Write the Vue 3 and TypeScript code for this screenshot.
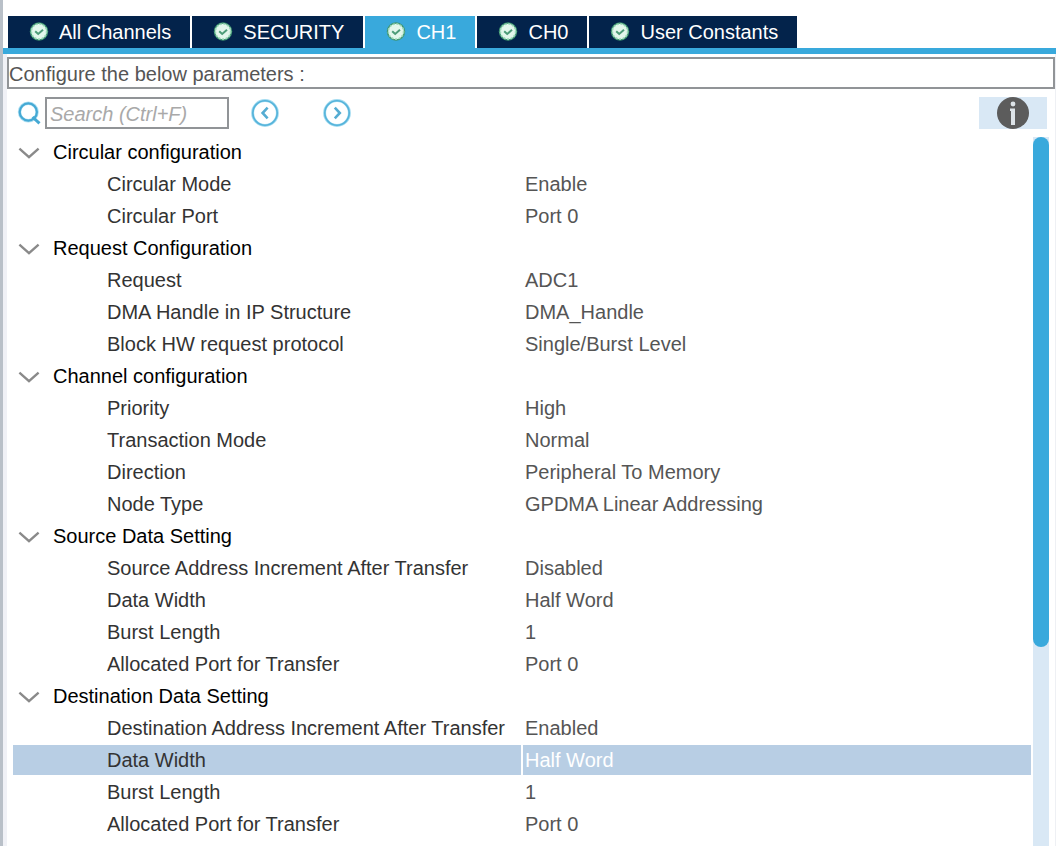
<script setup lang="ts">
import { ref } from 'vue'

interface Parameter {
  id: string
  name: string
  value: string
}

interface Group {
  title: string
  open: boolean
  items: Parameter[]
}

const tabs: string[] = ['All Channels', 'SECURITY', 'CH1', 'CH0', 'User Constants']
const activeTab = ref<string>('CH1')
const query = ref<string>('')
const selected = ref<string>('dst-width')

const groups = ref<Group[]>([
  {
    title: 'Circular configuration',
    open: true,
    items: [
      { id: 'circ-mode', name: 'Circular Mode', value: 'Enable' },
      { id: 'circ-port', name: 'Circular Port', value: 'Port 0' },
    ],
  },
  {
    title: 'Request Configuration',
    open: true,
    items: [
      { id: 'req', name: 'Request', value: 'ADC1' },
      { id: 'req-handle', name: 'DMA Handle in IP Structure', value: 'DMA_Handle' },
      { id: 'req-block', name: 'Block HW request protocol', value: 'Single/Burst Level' },
    ],
  },
  {
    title: 'Channel configuration',
    open: true,
    items: [
      { id: 'ch-priority', name: 'Priority', value: 'High' },
      { id: 'ch-mode', name: 'Transaction Mode', value: 'Normal' },
      { id: 'ch-direction', name: 'Direction', value: 'Peripheral To Memory' },
      { id: 'ch-node', name: 'Node Type', value: 'GPDMA Linear Addressing' },
    ],
  },
  {
    title: 'Source Data Setting',
    open: true,
    items: [
      { id: 'src-inc', name: 'Source Address Increment After Transfer', value: 'Disabled' },
      { id: 'src-width', name: 'Data Width', value: 'Half Word' },
      { id: 'src-burst', name: 'Burst Length', value: '1' },
      { id: 'src-port', name: 'Allocated Port for Transfer', value: 'Port 0' },
    ],
  },
  {
    title: 'Destination Data Setting',
    open: true,
    items: [
      { id: 'dst-inc', name: 'Destination Address Increment After Transfer', value: 'Enabled' },
      { id: 'dst-width', name: 'Data Width', value: 'Half Word' },
      { id: 'dst-burst', name: 'Burst Length', value: '1' },
      { id: 'dst-port', name: 'Allocated Port for Transfer', value: 'Port 0' },
    ],
  },
])
</script>

<template>
  <main class="panel">
    <div class="tabs" role="tablist">
      <button
        v-for="tab in tabs"
        :key="tab"
        type="button"
        role="tab"
        class="tab"
        :class="{ active: tab === activeTab }"
        :aria-selected="tab === activeTab"
        @click="activeTab = tab"
      >
        <svg class="tab-icon" viewBox="0 0 20 20" aria-hidden="true">
          <circle cx="10" cy="9.5" r="9.2" fill="#3f9470" />
          <circle cx="10" cy="9.5" r="7.8" fill="#e3f7ec" />
          <circle cx="10" cy="9.5" r="7.6" fill="none" stroke="#9bd9b8" stroke-width="1.6" stroke-dasharray="2 1.6" />
          <path d="M6.2 9.2l3 2.8 4.8-4.2" fill="none" stroke="#4d9c78" stroke-width="2" />
        </svg>
        <span>{{ tab }}</span>
      </button>
    </div>

    <div class="content">
      <p class="notice">Configure the below parameters :</p>

      <div class="toolbar">
        <label class="search-label" for="search" aria-label="Search">
          <svg class="search-icon" viewBox="0 0 24 24" aria-hidden="true">
            <circle cx="11.3" cy="11" r="8.8" fill="none" stroke="#aee0f3" stroke-width="3.4" />
            <circle cx="11.3" cy="11" r="8.6" fill="none" stroke="#45a9d4" stroke-width="2.2" />
            <path d="M15.5 16l7 6.4" fill="none" stroke="#45a9d4" stroke-width="3" />
          </svg>
        </label>
        <input id="search" v-model="query" class="search" type="text" placeholder="Search (Ctrl+F)" />
        <div class="nav">
          <button type="button" class="round" aria-label="Previous match">
            <svg viewBox="0 0 28 28" aria-hidden="true">
              <circle cx="14" cy="14" r="12.4" fill="#fff" stroke="#a4dcf1" stroke-width="3" />
              <circle cx="14" cy="14" r="12.2" fill="none" stroke="#55b3da" stroke-width="1.6" />
              <path d="M16.6 8.6l-5 5.4 5 5.4" fill="none" stroke="#55acd2" stroke-width="2.6" />
            </svg>
          </button>
          <button type="button" class="round" aria-label="Next match">
            <svg viewBox="0 0 28 28" aria-hidden="true">
              <circle cx="14" cy="14" r="12.4" fill="#fff" stroke="#a4dcf1" stroke-width="3" />
              <circle cx="14" cy="14" r="12.2" fill="none" stroke="#55b3da" stroke-width="1.6" />
              <path d="M11.8 8.6l5 5.4-5 5.4" fill="none" stroke="#55acd2" stroke-width="2.6" />
            </svg>
          </button>
        </div>
        <button type="button" class="info" aria-label="Information">
          <svg viewBox="0 0 32 32" aria-hidden="true">
            <circle cx="16" cy="16" r="16" fill="#5c5c5c" />
            <circle cx="16" cy="7" r="2.4" fill="#dde3e8" />
            <path d="M13 11.5h5V28h-4V14h-1z" fill="#dde3e8" />
          </svg>
        </button>
      </div>

      <div class="body">
        <table class="params">
          <tbody v-for="group in groups" :key="group.title">
            <tr>
              <th colspan="2" scope="rowgroup">
                <button type="button" class="group" :aria-expanded="group.open" @click="group.open = !group.open">
                  <svg class="chevron" :class="{ closed: !group.open }" viewBox="0 0 22 14" aria-hidden="true">
                    <path d="M1.4 3.6l9.6 8.6 9.6-8.6" fill="none" stroke="#8a8a8a" stroke-width="2.4" />
                  </svg>
                  <span>{{ group.title }}</span>
                </button>
              </th>
            </tr>
            <template v-if="group.open">
              <tr
                v-for="item in group.items"
                :key="item.id"
                :class="{ selected: item.id === selected }"
                @click="selected = item.id"
              >
                <td class="name">{{ item.name }}</td>
                <td class="value">{{ item.value }}</td>
              </tr>
            </template>
          </tbody>
        </table>
        <div class="track"><div class="thumb"></div></div>
      </div>
    </div>
  </main>
</template>

<style>
body {
  margin: 0;
  background: #fff;
}
</style>

<style scoped>
.panel {
  box-sizing: border-box;
  display: flex;
  flex-direction: column;
  min-height: 100vh;
  padding-top: 16px;
  border-left: 3px solid #b9c0c8;
  background: #fff;
  font-family: "Liberation Sans", Arial, sans-serif;
  font-size: 20px;
  line-height: 32px;
  color: #333;
}

button {
  margin: 0;
  padding: 0;
  border: 0;
  background: none;
  font: inherit;
  color: inherit;
  cursor: pointer;
}

.tabs {
  display: flex;
  gap: 2px;
  padding-left: 5px;
  border-bottom: 6px solid #39a9dc;
}

.tab {
  display: flex;
  align-items: center;
  gap: 10px;
  height: 32px;
  padding: 0 19px 0 21px;
  background: #03234b;
  color: #fff;
  white-space: nowrap;
}

.tab.active {
  background: #39a9dc;
}

.tab-icon {
  width: 20px;
  height: 20px;
}

.content {
  display: flex;
  flex: 1;
  flex-direction: column;
  padding-top: 3px;
  border-left: 4px solid #f0f1f6;
  border-right: 1px solid #eef0f4;
}

.notice {
  margin: 0;
  padding-top: 2px;
  border: 2px solid #919497;
  line-height: 26px;
  color: #555;
}

.toolbar {
  display: flex;
  align-items: center;
  padding: 8px 8px 7px 10px;
}

.search-label {
  display: flex;
  width: 28px;
}

.search-icon {
  width: 24px;
  height: 24px;
}

.search {
  box-sizing: border-box;
  width: 184px;
  height: 32px;
  padding: 2px 3px 0;
  border: 2px solid #919497;
  border-radius: 0;
  outline: none;
  background: #fff;
  font: inherit;
  color: #333;
}

.search::placeholder {
  font-style: italic;
  color: #a9a9a9;
  opacity: 1;
}

.nav {
  display: flex;
  gap: 44px;
  margin-left: 22px;
}

.round {
  display: flex;
  width: 28px;
  height: 28px;
}

.info {
  display: flex;
  justify-content: center;
  width: 68px;
  height: 32px;
  margin-left: auto;
  background: #d9e8f5;
}

.info svg {
  width: 32px;
  height: 32px;
}

.body {
  display: flex;
  flex: 1;
  gap: 2px;
  padding: 0 6px;
}

.params {
  flex: 1;
  align-self: flex-start;
  table-layout: fixed;
  border-collapse: separate;
  border-spacing: 0;
}

th,
td {
  height: 30px;
  padding: 0;
  border: 1px solid #fff;
  border-width: 1px 0;
  line-height: 30px;
  font-weight: normal;
  text-align: left;
  white-space: nowrap;
}

.group {
  display: flex;
  align-items: center;
  gap: 13px;
  padding-left: 5px;
  line-height: 30px;
  color: #000;
}

.chevron {
  width: 22px;
  height: 14px;
}

.chevron.closed {
  transform: rotate(-90deg);
}

.name {
  width: 50%;
  box-sizing: border-box;
  padding-left: 94px;
  border-right-width: 1px;
}

.value {
  width: 50%;
  box-sizing: border-box;
  padding-left: 2px;
  border-left-width: 1px;
  color: #555;
}

.selected td {
  background: #b8cee4;
  background-clip: padding-box;
}

.selected .value {
  color: #fff;
}

.track {
  width: 16px;
  margin-top: 1px;
  background: #d9e8f5;
}

.thumb {
  height: 72%;
  border-radius: 8px;
  background: #39a9dc;
}
</style>
